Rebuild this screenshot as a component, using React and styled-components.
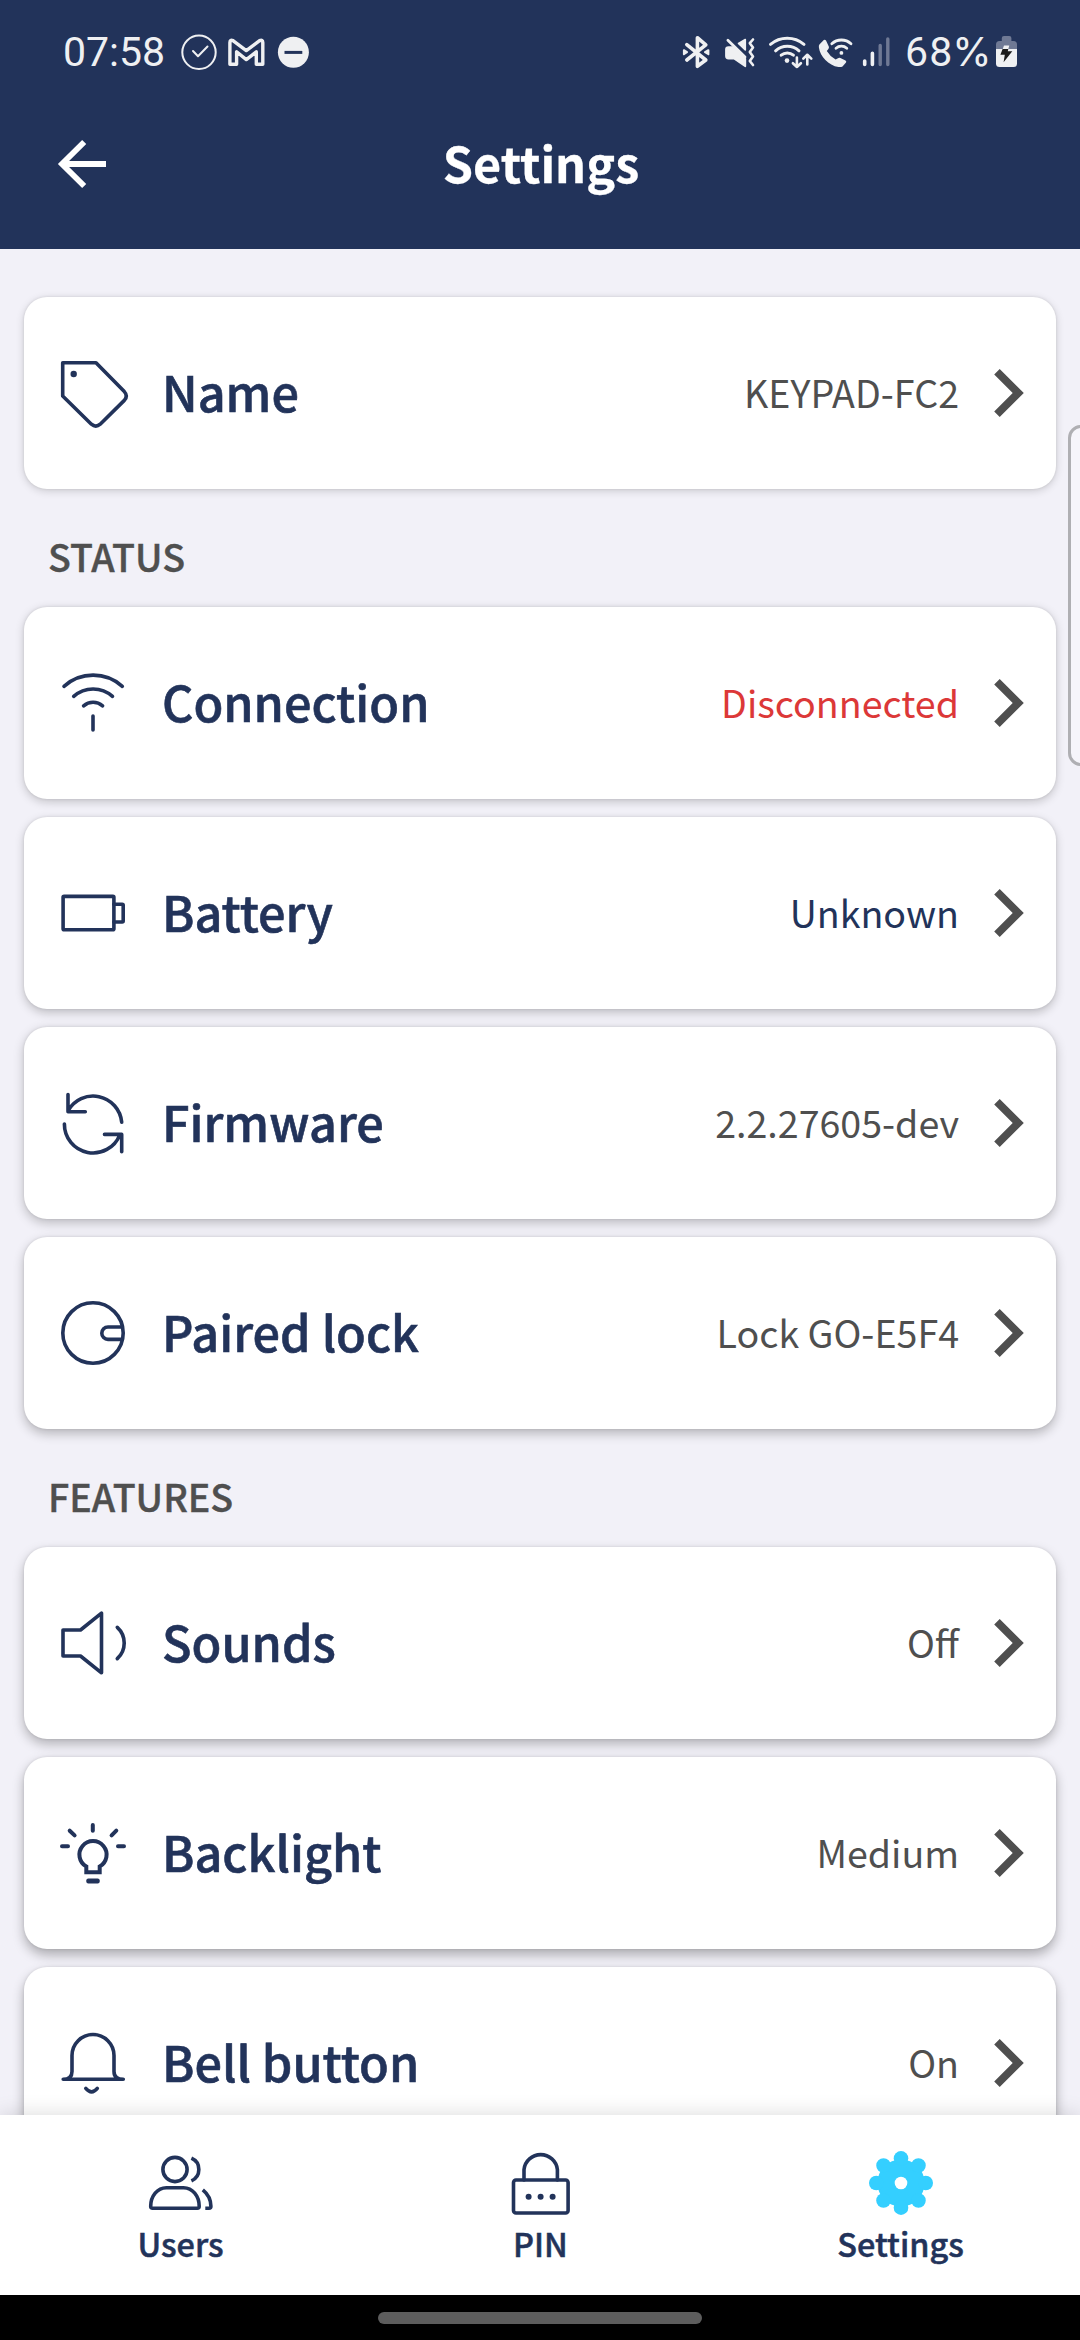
import React from "react";
import styled, { createGlobalStyle } from "styled-components";

const NAVY = "#22335a";
const GRAY = "#4f4f4f";
const LIGHT = "#eff0f2";
const DIM = "#6f7994";
const UI_FONT = '"Noto Sans CJK SC", "Open Sans", sans-serif';

const GlobalStyle = createGlobalStyle`
  body {
    margin: 0;
    background: #f2f1f8;
  }
`;

const Screen = styled.div`
  position: relative;
  display: flex;
  flex-direction: column;
  width: 1080px;
  height: 2340px;
  overflow: hidden;
  background: #f2f1f8;
  font-family: ${UI_FONT};
  color: ${NAVY};
`;

const Header = styled.header`
  flex: none;
  height: 249px;
  background: ${NAVY};
`;

const StatusBar = styled.div`
  display: flex;
  align-items: center;
  justify-content: space-between;
  height: 104px;
  padding: 0 62px 0 63px;
  box-sizing: border-box;
`;

const StatusGroup = styled.div`
  display: flex;
  align-items: center;
`;

const StatusText = styled.span`
  font-family: Roboto, sans-serif;
  font-size: 41px;
  line-height: 48px;
  color: ${LIGHT};
`;

const BatteryLevel = styled(StatusText)`
  width: 86px;
  margin-left: 14px;
  letter-spacing: 1.1px;
  white-space: nowrap;
`;

const PercentSign = styled.span`
  margin-left: -1px;
  font-family: Inter, sans-serif;
  font-size: 40px;
  letter-spacing: 0;
`;

const Glyph = styled.svg`
  display: block;
  flex: none;
  overflow: visible;
  margin-left: ${(p) => p.$gap || 0}px;
`;

const TitleBar = styled.div`
  display: grid;
  grid-template-columns: 162px 1fr 162px;
  align-items: center;
  height: 120px;
`;

const BackButton = styled.button`
  display: flex;
  padding: 0 0 0 54px;
  border: 0;
  background: none;
`;

const Title = styled.h1`
  margin: 0;
  padding: 0 0 4px 2px;
  font-size: 48.5px;
  font-weight: 700;
  line-height: 72px;
  text-align: center;
  color: #fff;
  -webkit-text-stroke: 0.3px currentColor;
`;

const Content = styled.main`
  flex: 1;
  min-height: 0;
  overflow: hidden;
  display: flex;
  flex-direction: column;
  padding: 48px 24px 0;
`;

const Cards = styled.div`
  flex: none;
  display: flex;
  flex-direction: column;
  gap: 18px;
`;

const SectionTitle = styled.h2`
  flex: none;
  box-sizing: border-box;
  height: 118px;
  margin: 0;
  padding: 37px 0 0 24px;
  font-size: 37.6px;
  font-weight: 500;
  line-height: 60px;
  color: ${GRAY};
  -webkit-text-stroke: 0.4px currentColor;
`;

const Card = styled.button`
  display: flex;
  align-items: center;
  box-sizing: border-box;
  height: 192px;
  padding: 0 32px 0 33px;
  border: 0;
  border-radius: 23px;
  background: #fff;
  font-family: inherit;
  text-align: left;
  box-shadow: 0 0 3px rgba(0, 0, 0, 0.1),
    0 ${(p) => 2 + p.$depth * 0.5}px ${(p) => 9 + p.$depth * 0.4}px
      rgba(0, 0, 0, ${(p) => 0.16 + p.$depth * 0.018});
`;

const CardLabel = styled.span`
  flex: 1;
  padding: 0 0 4px 33px;
  font-size: 48.6px;
  font-weight: 500;
  line-height: 72px;
  color: ${NAVY};
  -webkit-text-stroke: 0.6px currentColor;
`;

const CardValue = styled.span`
  padding-bottom: 2px;
  margin-right: 35px;
  font-size: 37.6px;
  line-height: 56px;
  color: ${(p) => p.$color || GRAY};
`;

const EdgeHandle = styled.div`
  position: absolute;
  top: 425px;
  right: -16px;
  box-sizing: border-box;
  width: 28px;
  height: 341px;
  border: 3px solid #afafb3;
  border-radius: 13px;
  background: #f6f5fb;
`;

const NavBar = styled.nav`
  position: relative;
  flex: none;
  display: grid;
  grid-template-columns: repeat(3, 1fr);
  height: 180px;
  background: #fff;
  box-shadow: 0 0 20px rgba(0, 0, 0, 0.15);
`;

const NavItem = styled.button`
  display: flex;
  flex-direction: column;
  align-items: center;
  padding: 32px 0 0;
  border: 0;
  background: none;
  font-family: inherit;
`;

const NavLabel = styled.span`
  padding-left: 1px;
  font-size: 32.4px;
  font-weight: 500;
  line-height: 48px;
  color: ${NAVY};
  -webkit-text-stroke: 0.5px currentColor;
`;

const SystemBar = styled.footer`
  position: relative;
  flex: none;
  display: flex;
  justify-content: center;
  height: 45px;
  padding-top: 17px;
  box-sizing: border-box;
  background: #000;
`;

const HomePill = styled.div`
  width: 324px;
  height: 12px;
  border-radius: 6px;
  background: #5d5d5d;
`;

/* Status bar glyphs share one coordinate space, 40px tall around y = 52. */
const StatusIcon = ({ x, w, gap, children }) => (
  <Glyph
    $gap={gap}
    width={w}
    height="40"
    viewBox={`${x} 32 ${w} 40`}
    fill="none"
    stroke={LIGHT}
    strokeWidth="3"
    strokeLinecap="round"
    strokeLinejoin="round"
  >
    {children}
  </Glyph>
);

const LineIcon = ({ children, width = 3.6 }) => (
  <Glyph
    width="72"
    height="72"
    viewBox="0 0 72 72"
    fill="none"
    stroke={NAVY}
    strokeWidth={width}
    strokeLinecap="round"
    strokeLinejoin="round"
  >
    {children}
  </Glyph>
);

const TagIcon = () => (
  <LineIcon>
    <path d="M5.7 5.7H39L67.3 34.6Q71.3 39 67.3 43.4L43.2 67.2Q38.8 71 34.4 67.2L5.7 39Z" />
    <circle cx="16.7" cy="17" r="3.2" fill={NAVY} stroke="none" />
  </LineIcon>
);

const WifiIcon = () => (
  <LineIcon>
    <path d="M7 19.3A43.6 43.6 0 0 1 65.3 19.3M16.7 29.4A29 29 0 0 1 55.5 29.4M26.6 38.8A14.6 14.6 0 0 1 45.6 38.8M36 49V63" />
  </LineIcon>
);

const BatteryIcon = () => (
  <LineIcon>
    <rect x="6.1" y="19.4" width="50.8" height="33.3" rx="1" />
    <path d="M56.9 27.2H65.2Q66.2 27.2 66.2 28.2V44Q66.2 45 65.2 45H56.9" />
  </LineIcon>
);

const RefreshIcon = () => (
  <LineIcon>
    <path d="M64.7 35.2A28.7 28.7 0 0 0 11 23.9M11 7.5V24.7H28.3" />
    <path d="M7.4 37A28.7 28.7 0 0 0 62.8 47.8M47.5 47.4H64.7V64.8" />
  </LineIcon>
);

const LockKnobIcon = () => (
  <LineIcon>
    <circle cx="36" cy="36" r="30.2" />
    <path d="M65 30H51A6.2 6.2 0 0 0 51 42.4H65" />
  </LineIcon>
);

const SoundIcon = () => (
  <LineIcon>
    <path d="M6 23H23.5L44.5 6.2V65.8L23.5 49H6Z" />
    <path d="M60.3 20.3A21.3 21.3 0 0 1 60.3 51.7" />
  </LineIcon>
);

const BulbIcon = () => (
  <LineIcon width={4}>
    <path d="M35.8 8V13.8M5 29.3H11M61 29.3H67M12.7 13.7L17.6 18.4M59.3 13.7L54.6 18.4" />
    <path
      d="M29.3 55.3V49.5A13.6 13.6 0 1 1 42.7 49.5V55.3Z"
      strokeLinejoin="miter"
    />
    <rect x="29.3" y="61.5" width="13.4" height="5" rx="2" fill={NAVY} stroke="none" />
  </LineIcon>
);

const BellIcon = () => (
  <LineIcon>
    <path d="M6.2 52.3H66.3C60 52.3 57 49.5 57 44.5V28.5A21 21 0 0 0 15 28.5V44.5C15 49.5 12.5 52.3 6.2 52.3Z" />
    <path d="M28.8 61.4Q34.6 68.4 40.3 61.4" />
  </LineIcon>
);

const Chevron = () => (
  <Glyph width="30" height="50" viewBox="994 368 30 50" fill={GRAY}>
    <path d="M999.7 368.9L1023.8 393L999.7 417.1L994.2 411.6L1012.7 393L994.2 374.4Z" />
  </Glyph>
);

const UsersIcon = () => (
  <LineIcon>
    <circle cx="31" cy="22.5" r="12.1" />
    <path d="M47.4 11.2A12.3 12.3 0 0 1 47.4 33.8" strokeLinecap="butt" />
    <path d="M8.7 61.3H53.2Q55.2 61.3 55.2 59.3C55.2 49 48.5 40.7 39.5 40.7H22.4C13.4 40.7 6.7 49 6.7 59.3Q6.7 61.3 8.7 61.3Z" />
    <path d="M58.8 42.8C64 47 66.9 53 66.9 59.3Q66.9 61.3 65 61.3H61.3" strokeLinecap="butt" />
  </LineIcon>
);

const PinIcon = () => (
  <LineIcon>
    <rect x="9.5" y="33" width="54.6" height="33" rx="2.5" />
    <path d="M20 33V22.6A16.8 16.8 0 0 1 53.4 22.6V33" />
    <g fill={NAVY} stroke="none">
      <circle cx="24.6" cy="49.7" r="3" />
      <circle cx="36.6" cy="49.7" r="3" />
      <circle cx="48.6" cy="49.7" r="3" />
    </g>
  </LineIcon>
);

const GearIcon = () => (
  <Glyph width="72" height="72" viewBox="0 0 72 72" fill="#34cfff">
    <circle cx="37" cy="36" r="23.6" />
    {[0, 45, 90, 135, 180, 225, 270, 315].map((a) => (
      <circle key={a} cx="37" cy="11.3" r="7.3" transform={`rotate(${a} 37 36)`} />
    ))}
    <circle cx="37" cy="36" r="6.3" fill="#fff" />
  </Glyph>
);

const DEVICE = [{ label: "Name", value: "KEYPAD-FC2", Icon: TagIcon, depth: 0 }];

const STATUS = [
  { label: "Connection", value: "Disconnected", Icon: WifiIcon, color: "#dc3838", depth: 1.5 },
  { label: "Battery", value: "Unknown", Icon: BatteryIcon, color: NAVY, depth: 2.5 },
  { label: "Firmware", value: "2.2.27605-dev", Icon: RefreshIcon, depth: 3.5 },
  { label: "Paired lock", value: "Lock GO-E5F4", Icon: LockKnobIcon, depth: 4.5 },
];

const FEATURES = [
  { label: "Sounds", value: "Off", Icon: SoundIcon, depth: 6 },
  { label: "Backlight", value: "Medium", Icon: BulbIcon, depth: 7 },
  { label: "Bell button", value: "On", Icon: BellIcon, depth: 8 },
];

const NAV = [
  { label: "Users", Icon: UsersIcon },
  { label: "PIN", Icon: PinIcon },
  { label: "Settings", Icon: GearIcon },
];

const CardList = ({ rows }) => (
  <Cards>
    {rows.map(({ label, value, Icon, color, depth }) => (
      <Card key={label} $depth={depth}>
        <Icon />
        <CardLabel>{label}</CardLabel>
        <CardValue $color={color}>{value}</CardValue>
        <Chevron />
      </Card>
    ))}
  </Cards>
);

export default function App() {
  return (
    <Screen>
      <GlobalStyle />
      <Header>
        <StatusBar>
          <StatusGroup>
            <StatusText>07:58</StatusText>
            <StatusIcon x={181} w={36} gap={16}>
              <circle cx="199" cy="52.3" r="16.7" strokeWidth="2" />
              <path d="M193 51L198 56.2L207.5 46.5" strokeWidth="2" />
            </StatusIcon>
            <StatusIcon x={228} w={37} gap={11}>
              <path
                strokeWidth="3.4"
                d="M229.9 64.3V42.5Q230 39.2 233 40.6L246.3 50.6L259.6 40.6Q262.7 39.2 262.8 42.5V64.3H256.3V51.8L246.3 59.6L236.6 51.8V64.3Z"
              />
            </StatusIcon>
            <StatusIcon x={278} w={31} gap={13}>
              <circle cx="293.4" cy="52.3" r="15.5" fill={LIGHT} stroke="none" />
              <path d="M284.5 52.4H302.3" stroke={NAVY} strokeLinecap="butt" />
            </StatusIcon>
          </StatusGroup>
          <StatusGroup>
            <StatusIcon x={683} w={27}>
              <path
                strokeWidth="3.6"
                d="M686.8 44.6L705.8 60L697.4 66.3V37.7L705.8 44.8L686.8 60"
              />
              <path d="M683.9 50.2L687 52.2L683.9 54.2Z M708.4 50.2L705 52.2L708.4 54.2Z" strokeWidth="2" fill={LIGHT} />
            </StatusIcon>
            <StatusIcon x={725} w={30} gap={15}>
              <path d="M726 49.5Q726 47.2 728.5 47.2H733L745.3 59V66.3L734 58.5H728.5Q726 58.5 726 56Z" fill={LIGHT} strokeWidth="1.8" />
              <path d="M745.3 39.5V50L738.5 43.4Z" fill={LIGHT} strokeWidth="1.6" />
              <path d="M727.9 40.3L745 57" strokeWidth="2.8" />
              <path d="M753 39.5L749.8 43.2L753 47.6L749.8 52L753 56.5L749.8 61L753 65" strokeWidth="2.6" />
            </StatusIcon>
            <StatusIcon x={769} w={44} gap={14}>
              <path d="M770.5 44.3A26 26 0 0 1 804 44.3M775.6 50.8A17.5 17.5 0 0 1 799 50.8M781.2 55.2A9.3 9.3 0 0 1 793.4 55.2" />
              <circle cx="787" cy="60.6" r="2.3" fill={LIGHT} stroke="none" />
              <path d="M796.9 57.5V67M792.9 63.2L796.9 67L800.9 63.2M807.3 64.5V54.8M803.3 58.6L807.3 54.8L811.3 58.6" strokeWidth="2.6" />
            </StatusIcon>
            <StatusIcon x={819} w={34} gap={6}>
              <path
                stroke="none"
                fill={LIGHT}
                d="M819.4 44.5L823.8 40Q825.1 39.2 826 40.6L828.8 46.6Q829.3 47.9 828.4 49L826.8 51Q830 56.4 835.6 59.6L838 58.2Q839.2 57.4 840.4 58L845.5 60.4Q846.8 61.2 846 62.6L842.5 66.4Q841 67.4 838.5 67C828.5 65.3 820.2 56.6 818.9 47.4Q818.6 45.6 819.4 44.5Z"
              />
              <path d="M831.8 43.8A14 14 0 0 1 851 43.8M836 48.2A8 8 0 0 1 846.8 48.2" strokeWidth="2.8" />
              <circle cx="841.4" cy="52.9" r="1.9" fill={LIGHT} stroke="none" />
            </StatusIcon>
            <StatusIcon x={862} w={29} gap={9}>
              <path d="M864.7 61V64.5M872.4 53.2V64.5" strokeWidth="3.6" />
              <path d="M880.2 45.5V64.5M887.8 39V64.5" stroke={DIM} strokeWidth="3.4" />
            </StatusIcon>
            <BatteryLevel>
              68<PercentSign>%</PercentSign>
            </BatteryLevel>
            <StatusIcon x={996} w={22} gap={5}>
              <path
                stroke="none"
                fill={DIM}
                d="M996 49V44.5Q996 41 999.5 41H1001.8V38Q1001.8 36 1004 36H1009.3Q1011.4 36 1011.4 38V41H1013.5Q1017 41 1017 44.5V49Z"
              />
              <path stroke="none" fill={LIGHT} d="M996 49H1017V63.5Q1017 67 1013.5 67H999.5Q996 67 996 63.5Z" />
              <path stroke="none" fill={LIGHT} d="M1004 45.6H1009.3L1008 50H1002.4Z" />
              <path stroke="none" fill="#1b1b1b" d="M1002.6 49H1008.3L1007.8 51.3H1012.3L1003.6 62.2L1004.8 54.8H1000.4Z" />
            </StatusIcon>
          </StatusGroup>
        </StatusBar>
        <TitleBar>
          <BackButton aria-label="Back">
            <Glyph width="54" height="54" viewBox="54 137 54 54" fill="none" stroke="#fff" strokeWidth="5.8">
              <path d="M84.2 142L62 164L84.2 186M62 164H106" />
            </Glyph>
          </BackButton>
          <Title>Settings</Title>
        </TitleBar>
      </Header>
      <Content>
        <CardList rows={DEVICE} />
        <SectionTitle>STATUS</SectionTitle>
        <CardList rows={STATUS} />
        <SectionTitle>FEATURES</SectionTitle>
        <CardList rows={FEATURES} />
      </Content>
      <NavBar>
        {NAV.map(({ label, Icon }) => (
          <NavItem key={label}>
            <Icon />
            <NavLabel>{label}</NavLabel>
          </NavItem>
        ))}
      </NavBar>
      <SystemBar>
        <HomePill />
      </SystemBar>
      <EdgeHandle />
    </Screen>
  );
}
